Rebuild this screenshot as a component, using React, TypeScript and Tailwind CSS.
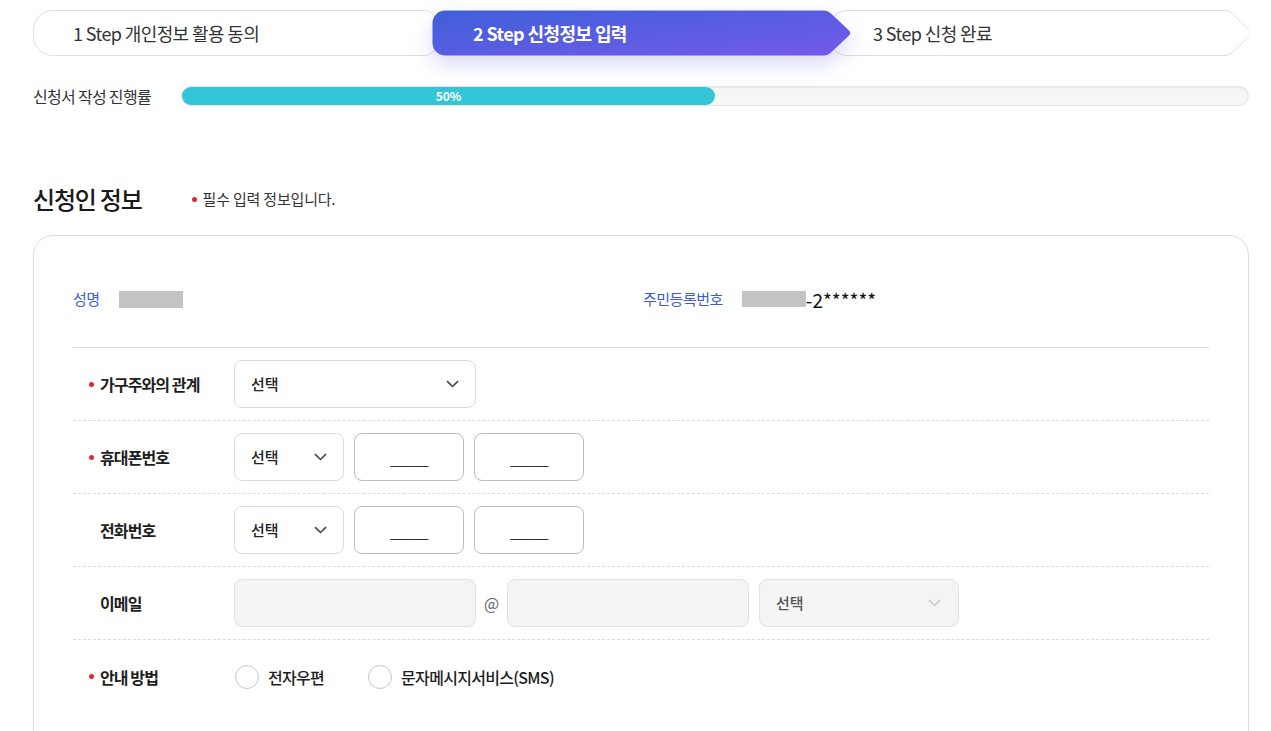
import React from 'react';

const FONT = { fontFamily: '"Noto Sans CJK KR", "Noto Sans", sans-serif' };

// step shape: rounded left side, arrow on the right
function stepPath(w: number, h: number, r: number, d: number) {
    const m = h / 2;
    return `M ${r} 0.5 H ${w - d - 4} Q ${w - d} 0.5 ${w - d + 3} 3.5 L ${w - 3} ${m - 2.5} Q ${w - 0.5} ${m} ${w - 3} ${m + 2.5} L ${w - d + 3} ${h - 3.5} Q ${w - d} ${h - 0.5} ${w - d - 4} ${h - 0.5} H ${r} A ${r - 0.5} ${r - 0.5} 0 0 1 0.5 ${h - r} V ${r} A ${r - 0.5} ${r - 0.5} 0 0 1 ${r} 0.5 Z`;
}

function StepShape({ w, r, active }: { w: number; r: number; active?: boolean }) {
    return (
        <svg
            width={w}
            height={46}
            viewBox={`0 0 ${w} 46`}
            className={active ? 'absolute inset-0 drop-shadow-[0_9px_10px_rgba(84,84,220,0.22)]' : 'absolute inset-0'}
        >
            <defs>
                <linearGradient id="stepGrad" x1="0" y1="0" x2="1" y2="1">
                    <stop offset="0%" stopColor="#3e60d9" />
                    <stop offset="100%" stopColor="#745ae9" />
                </linearGradient>
            </defs>
            <path
                d={stepPath(w, 46, r, 24)}
                fill={active ? 'url(#stepGrad)' : '#ffffff'}
                stroke={active ? 'none' : '#dedede'}
                strokeWidth={1}
            />
        </svg>
    );
}

function Chevron({ light }: { light?: boolean }) {
    return (
        <svg width="13" height="8" viewBox="0 0 13 8" fill="none">
            <path d="M1 1.2l5.5 5.3 5.5-5.3" stroke={light ? '#c9c9c9' : '#444444'} strokeWidth="1.6" />
        </svg>
    );
}

function Select({ w, disabled }: { w: string; disabled?: boolean }) {
    return (
        <div
            className={
                disabled
                    ? `${w} h-[48px] rounded-[8px] border border-[#e2e2e2] bg-[#f4f4f4] flex items-center justify-between pl-[16px] pr-[17px]`
                    : `${w} h-[48px] rounded-[8px] border border-[#dcdcdc] bg-white flex items-center justify-between pl-[16px] pr-[16px]`
            }
        >
            <span className={disabled ? 'text-[15px] text-[#555] font-medium' : 'text-[15px] text-[#222] font-medium'}>선택</span>
            <Chevron light={disabled} />
        </div>
    );
}

function NumInput() {
    return (
        <div className="w-[110px] h-[48px] rounded-[8px] border border-[#bdbdbd] bg-white flex items-center justify-center">
            <span className="text-[18px] text-[#333] pt-[1px] tracking-[-0.5px]">____</span>
        </div>
    );
}

function Label({ text, required }: { text: string; required?: boolean }) {
    return (
        <div className="w-[161px] pl-[16px] flex items-center shrink-0">
            <span className="w-[11px] flex items-center">
                {required && <span className="w-[5px] h-[5px] rounded-full bg-[#e0262f]" />}
            </span>
            <span className="text-[16px] font-bold text-[#1e1e1e] tracking-[-0.9px]">{text}</span>
        </div>
    );
}

function Row({ children, last }: { children: React.ReactNode; last?: boolean }) {
    return (
        <div className={last ? 'h-[73px] flex items-center' : 'h-[73px] flex items-center border-b border-dashed border-[#dcdcdc]'}>
            {children}
        </div>
    );
}

function Radio({ label }: { label: string }) {
    return (
        <label className="flex items-center gap-[9px]">
            <span className="w-[24px] h-[24px] rounded-full border border-[#c8c8c8] bg-white" />
            <span className="text-[16px] font-medium text-[#1e1e1e] tracking-[-0.7px]">{label}</span>
        </label>
    );
}

export default function App() {
    return (
        <div className="bg-white min-h-screen" style={FONT}>
            <div className="w-[1216px] ml-[33px] pt-[10px] overflow-hidden">
                {/* step indicator */}
                <div className="flex h-[46px] w-[1260px]">
                    <div className="relative w-[420px] h-[46px] shrink-0">
                        <StepShape w={420} r={20} />
                        <span className="relative flex h-full items-center pl-[40px] text-[18px] text-[#333] tracking-[-0.6px]">
                            1 Step 개인정보 활용 동의
                        </span>
                    </div>
                    <div className="relative z-10 w-[420px] h-[46px] shrink-0 -ml-[21px]">
                        <StepShape w={420} r={13} active />
                        <span className="relative flex h-full items-center pl-[41px] text-[18px] font-bold text-white tracking-[-0.6px]">
                            2 Step 신청정보 입력
                        </span>
                    </div>
                    <div className="relative w-[425px] h-[46px] shrink-0 -ml-[24px]">
                        <StepShape w={425} r={20} />
                        <span className="relative flex h-full items-center pl-[45px] text-[18px] text-[#333] tracking-[-0.6px]">
                            3 Step 신청 완료
                        </span>
                    </div>
                </div>

                {/* progress */}
                <div className="flex items-center mt-[30px] h-[20px]">
                    <span className="w-[148px] shrink-0 text-[16px] text-[#333] tracking-[-0.7px]">신청서 작성 진행률</span>
                    <div className="flex-1 h-[20px] rounded-full bg-[#f6f6f6] border border-[#e4e4e4] shadow-[inset_0_1px_2px_rgba(0,0,0,0.06)]">
                        <div className="w-1/2 h-full rounded-full bg-[#33c5d5] flex items-center justify-center">
                            <span className="text-[12px] font-bold text-white leading-none">50%</span>
                        </div>
                    </div>
                </div>

                {/* section heading */}
                <div className="flex items-center mt-[78px] h-[30px]">
                    <h2 className="text-[24px] font-medium text-[#1a1a1a] tracking-[-1.2px]">신청인 정보</h2>
                    <span className="ml-[50px] w-[5px] h-[5px] rounded-full bg-[#e0262f]" />
                    <span className="ml-[6px] text-[15px] text-[#333] tracking-[-0.2px]">필수 입력 정보입니다.</span>
                </div>

                {/* form card */}
                <div className="mt-[21px] border border-[#dddddd] rounded-[20px] px-[39px] pb-[40px]">
                    <div className="grid grid-cols-2 pt-[51px] pb-[36px] border-b border-[#dedede]">
                        <div className="flex items-center h-[24px] gap-[19px]">
                            <span className="text-[15px] text-[#3d5ad8] tracking-[-0.5px]">성명</span>
                            <span className="w-[64px] h-[17px] bg-[#c3c3c3]" />
                        </div>
                        <div className="flex items-center h-[24px]">
                            <span className="text-[15px] text-[#3d5ad8] ml-[2px] tracking-[-0.5px]">주민등록번호</span>
                            <span className="w-[64px] h-[16px] bg-[#c3c3c3] ml-[19px]" />
                            <span className="text-[19px] text-[#111] leading-none">-2******</span>
                        </div>
                    </div>

                    <Row>
                        <Label text="가구주와의 관계" required />
                        <Select w="w-[242px]" />
                    </Row>
                    <Row>
                        <Label text="휴대폰번호" required />
                        <div className="flex gap-[10px]">
                            <Select w="w-[110px]" />
                            <NumInput />
                            <NumInput />
                        </div>
                    </Row>
                    <Row>
                        <Label text="전화번호" />
                        <div className="flex gap-[10px]">
                            <Select w="w-[110px]" />
                            <NumInput />
                            <NumInput />
                        </div>
                    </Row>
                    <Row>
                        <Label text="이메일" />
                        <div className="flex items-center">
                            <div className="w-[242px] h-[48px] rounded-[8px] border border-[#e2e2e2] bg-[#f4f4f4]" />
                            <span className="w-[31px] text-center text-[16px] text-[#666]">@</span>
                            <div className="w-[242px] h-[48px] rounded-[8px] border border-[#e2e2e2] bg-[#f4f4f4]" />
                            <div className="ml-[10px]">
                                <Select w="w-[200px]" disabled />
                            </div>
                        </div>
                    </Row>
                    <Row last>
                        <Label text="안내 방법" required />
                        <div className="flex items-center gap-[44px] pl-[1px]">
                            <Radio label="전자우편" />
                            <Radio label="문자메시지서비스(SMS)" />
                        </div>
                    </Row>
                </div>
            </div>
        </div>
    );
}
